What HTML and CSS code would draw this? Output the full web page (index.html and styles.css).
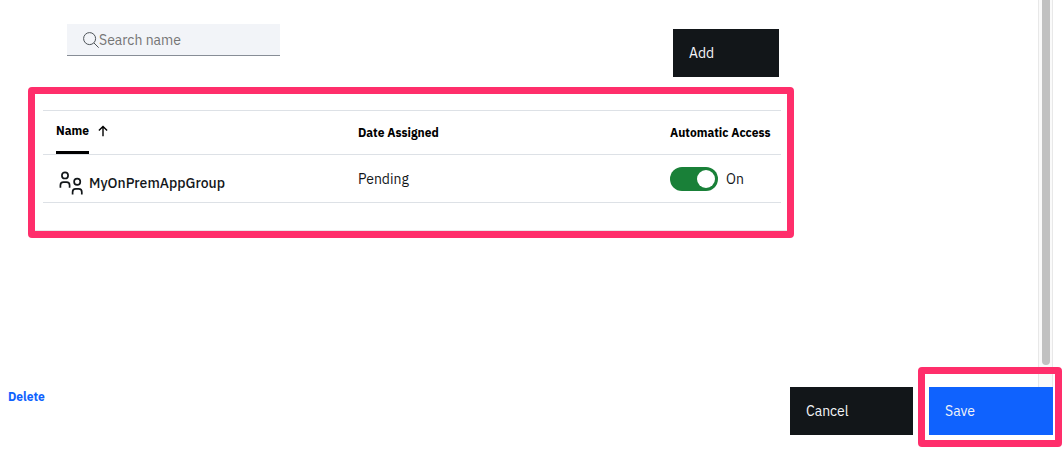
FILE: index.html
```html
<!DOCTYPE html>
<html lang="en">
<head>
<meta charset="utf-8">
<title>Application groups</title>
<link rel="stylesheet" href="styles.css">
</head>
<body class="page">
<div class="body">
  <main class="content">
    <div class="toolbar">
      <label class="search">
        <svg class="search-icon" viewBox="0 0 16 16" aria-hidden="true"><circle cx="6.6" cy="6.6" r="6"/><path d="M11 11L15.7 15.7"/></svg>
        <input class="search-input" type="search" placeholder="Search name" aria-label="Search name">
      </label>
      <button class="button button-add" type="button">Add</button>
    </div>
    <section class="panel">
      <table class="groups">
        <thead>
          <tr>
            <th class="col-name" aria-sort="ascending">
              <button class="sort" type="button"><span class="sort-label">Name</span><svg class="sort-icon" viewBox="0 0 10 12" aria-hidden="true"><path d="M5 11.3V1.4M.9 5.5L5 1.4L9.1 5.5"/></svg></button>
            </th>
            <th class="col-date">Date Assigned</th>
            <th>Automatic Access</th>
          </tr>
        </thead>
        <tbody>
          <tr>
            <td>
              <div class="group">
                <svg class="group-icon" viewBox="0 0 24 24" aria-hidden="true"><circle cx="6" cy="4.4" r="3.1"/><path d="M1.4 16.8V14.2C1.4 12.4 2.8 11.2 4.5 11.2H7.5C9.2 11.2 10.6 12.4 10.6 14.2V16.8"/><circle cx="18.2" cy="10.8" r="3.1"/><path d="M13.6 23.6V20.9C13.6 19.1 15 17.8 16.7 17.8H19.7C21.4 17.8 22.8 19.1 22.8 20.9V23.6"/></svg>
                <span>MyOnPremAppGroup</span>
              </div>
            </td>
            <td>Pending</td>
            <td><label class="access"><input class="toggle" type="checkbox" role="switch" checked>On</label></td>
          </tr>
        </tbody>
      </table>
    </section>
  </main>
  <div class="track" aria-hidden="true"><div class="thumb"></div></div>
</div>
<footer class="footer">
  <a class="delete" href="#">Delete</a>
  <div class="actions">
    <button class="button" type="button">Cancel</button>
    <div class="highlight"><button class="button button-save" type="button">Save</button></div>
  </div>
</footer>
</body>
</html>
```
FILE: styles.css
```css
* { box-sizing: border-box; }

.page {
  margin: 0;
  min-height: 100vh;
  display: flex;
  flex-direction: column;
  background: #fff;
  color: #121619;
  font: 14px/18px "IBM Plex Sans", "Noto Sans", sans-serif;
}

.page button, .page input { font: inherit; }

.body {
  flex: 1;
  display: flex;
}

.content {
  flex: 1;
  padding: 24px 244px 0 28px;
}

.toolbar {
  display: flex;
  justify-content: space-between;
  height: 53px;
  margin-bottom: 10px;
  padding: 0 15px 0 39px;
}

.search {
  display: flex;
  align-items: center;
  width: 213px;
  height: 32px;
  padding-left: 16px;
  background: #f2f4f8;
  border-bottom: 1px solid #878d96;
}

.search-icon {
  flex: none;
  width: 16px;
  height: 16px;
  fill: none;
  stroke: #4d5358;
}

.search-input {
  flex: 1;
  min-width: 0;
  padding: 0;
  border: 0;
  outline: 0;
  background: none;
  appearance: none;
}

.search-input::placeholder { color: #757575; }

.button {
  width: 123px;
  height: 48px;
  padding: 0 16px;
  border: 0;
  background: #121619;
  color: #f2f4f8;
  text-align: left;
}

.button-add {
  align-self: flex-end;
  width: 106px;
}

.panel {
  padding: 16px 6px 28px 8px;
  border: 7px solid #ff2e6b;
  border-radius: 4px;
  box-shadow: inset 0 -1px #e8e8e8;
}

.groups {
  width: 100%;
  table-layout: fixed;
  border-collapse: separate;
  border-spacing: 0;
  border-top: 1px solid #dde1e6;
}

.groups th, .groups td {
  padding: 0 0 0 13px;
  border-bottom: 1px solid #dde1e6;
  text-align: left;
  white-space: nowrap;
}

.groups th {
  height: 44px;
  color: #000;
  font-size: 12px;
  font-weight: 700;
}

.groups td { height: 48px; }

.col-name { width: 302px; }
.col-date { width: 312px; }

.sort {
  display: flex;
  align-items: center;
  gap: 9px;
  height: 43px;
  padding: 0;
  border: 0;
  background: none;
  color: #000;
}

.sort-label {
  height: 43px;
  border-bottom: 3px solid #000;
  line-height: 40px;
}

.sort-icon {
  width: 10px;
  height: 12px;
  margin-bottom: 3px;
  fill: none;
  stroke: #000;
  stroke-width: 1.4;
}

.group {
  display: flex;
  align-items: center;
  gap: 6px;
  padding: 8px 0 0 3px;
  font-weight: 500;
}

.group-icon {
  flex: none;
  width: 24px;
  height: 24px;
  fill: none;
  stroke: #121619;
  stroke-width: 1.7;
}

.access {
  display: flex;
  align-items: center;
  gap: 8px;
}

.toggle {
  display: flex;
  width: 48px;
  height: 24px;
  margin: 0;
  padding: 3px;
  border-radius: 12px;
  background: #198038;
  appearance: none;
}

.toggle::before {
  content: "";
  width: 18px;
  height: 18px;
  border-radius: 50%;
  background: #fff;
}

.toggle:checked::before { margin-left: auto; }

.track {
  width: 15px;
  margin-right: 10px;
  padding: 0 3px 22px;
  border: solid #e8e8e8;
  border-width: 0 1px;
  background: #fafafa;
}

.thumb {
  width: 8px;
  height: 100%;
  border-radius: 0 0 4px 4px;
  background: #c1c1c1;
}

.footer {
  display: flex;
  justify-content: space-between;
  padding: 0 10px 15px 8px;
}

.delete {
  color: #0f62fe;
  font-size: 12px;
  font-weight: 700;
  line-height: 20px;
  text-decoration: none;
}

.actions {
  display: flex;
  gap: 16px;
}

.highlight { position: relative; }

.highlight::after {
  content: "";
  position: absolute;
  inset: -20px -9px -12px -11px;
  border: 7px solid #ff2e6b;
  border-radius: 4px;
  pointer-events: none;
}

.button-save {
  width: 124px;
  background: #0f62fe;
}
```
